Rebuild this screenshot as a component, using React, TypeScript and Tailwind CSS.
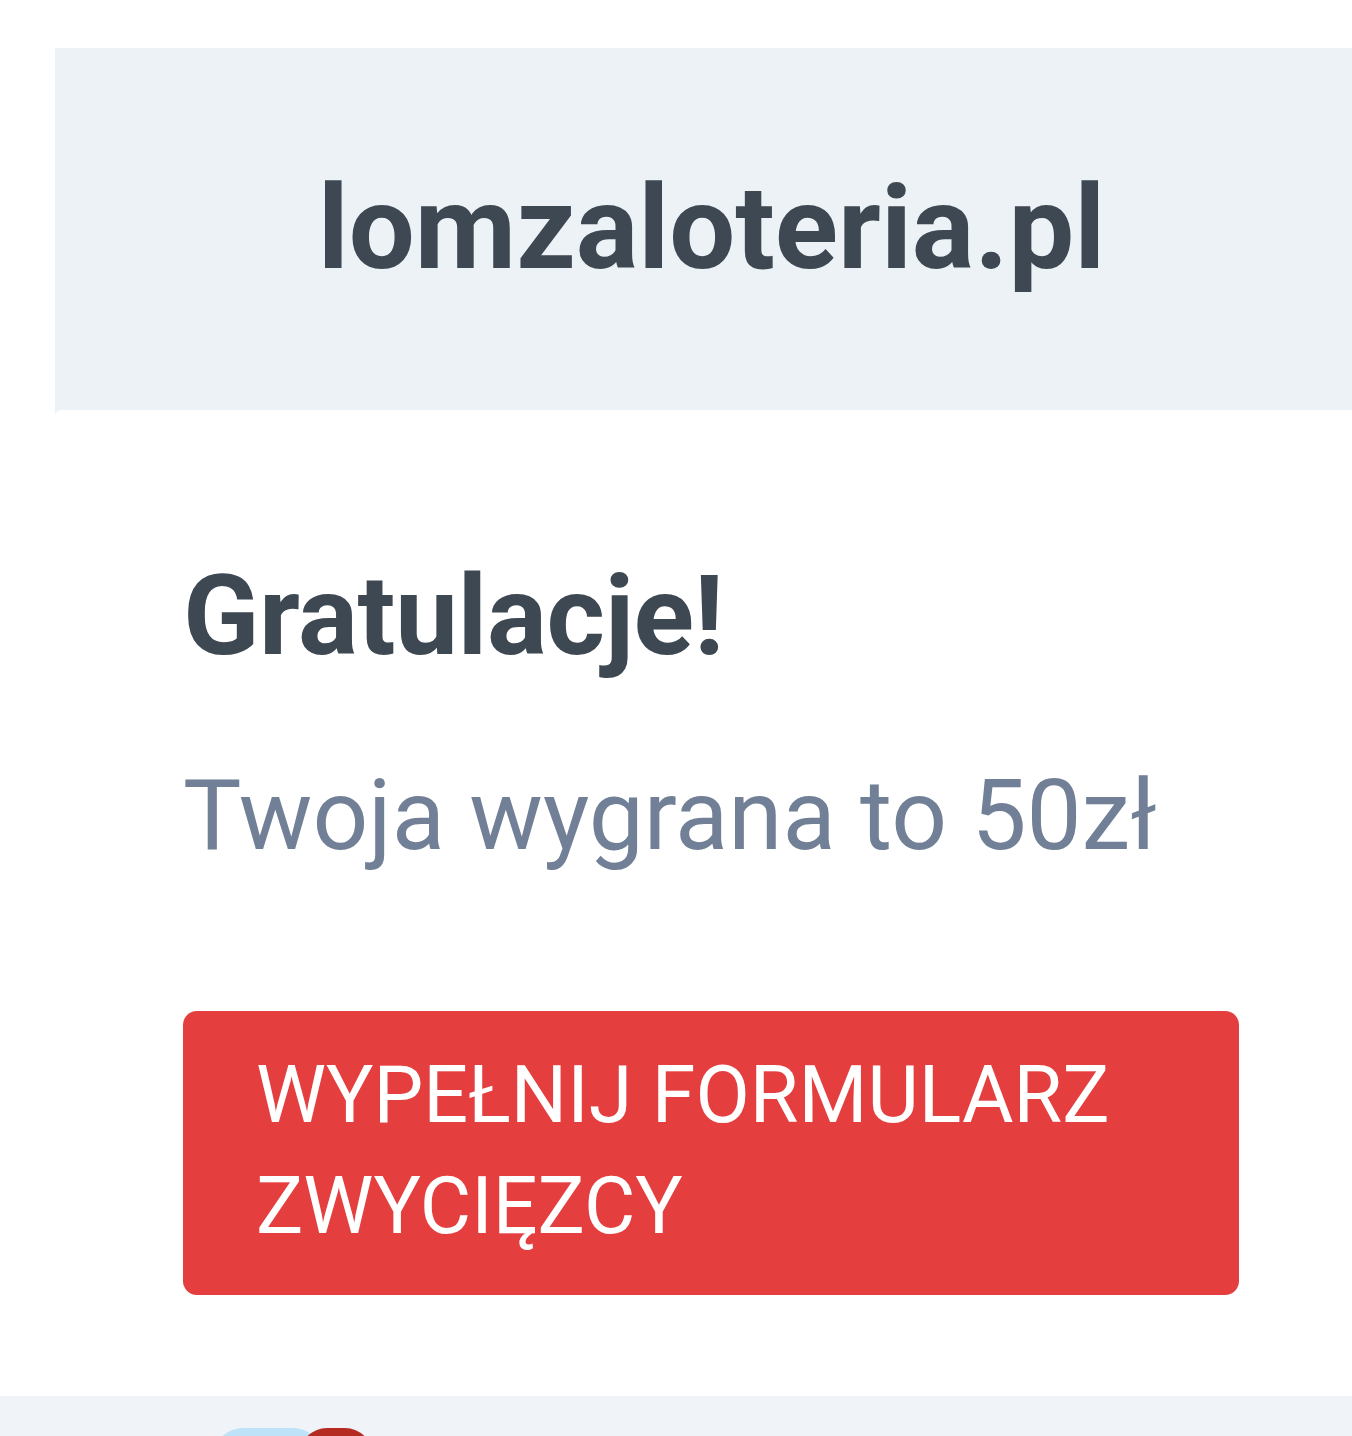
import React from 'react';

const App: React.FC = () => {
    return (
        <div className="min-h-screen w-full overflow-hidden bg-white" style={{ fontFamily: 'Roboto, "Noto Sans", sans-serif' }}>
            <div className="pt-[48px] pl-[55px]">
                <div className="bg-[#edf2f7]">
                    {/* site name */}
                    <div className="h-[362px] flex items-center justify-center pl-[16px]">
                        <h1 className="text-[117px] leading-none font-bold text-[#3d4852] pb-[2px]">lomzaloteria.pl</h1>
                    </div>
                    <div className="bg-white rounded-tl-[6px] pl-[128px] pt-[150px] pb-[101px]">
                        <h2 className="text-[112px] leading-none font-bold text-[#3d4852] tracking-[-0.3px]">Gratulacje!</h2>
                        <p className="mt-[95px] text-[98px] leading-none text-[#718096]">Twoja wygrana to 50zł</p>
                        <button
                            type="button"
                            className="mt-[146px] w-[1056px] rounded-[14px] bg-[#e53e3e] pl-[73px] pr-[72px] pt-[29px] pb-[33px] text-left text-[79px] leading-[111px] text-white uppercase"
                        >
                            Wypełnij formularz zwycięzcy
                        </button>
                    </div>
                </div>
            </div>
            <div className="-ml-[55px] w-[1420px] bg-[#f0f4f8] h-[60px] pl-[268px] pt-[32px] flex items-start">
                <div className="w-[110px] h-[60px] rounded-[30px] bg-[#bee3f8]"></div>
                <div className="-ml-[24px] w-[74px] h-[60px] rounded-t-[28px] bg-[#b52a21]"></div>
            </div>
        </div>
    );
};

export default App;
